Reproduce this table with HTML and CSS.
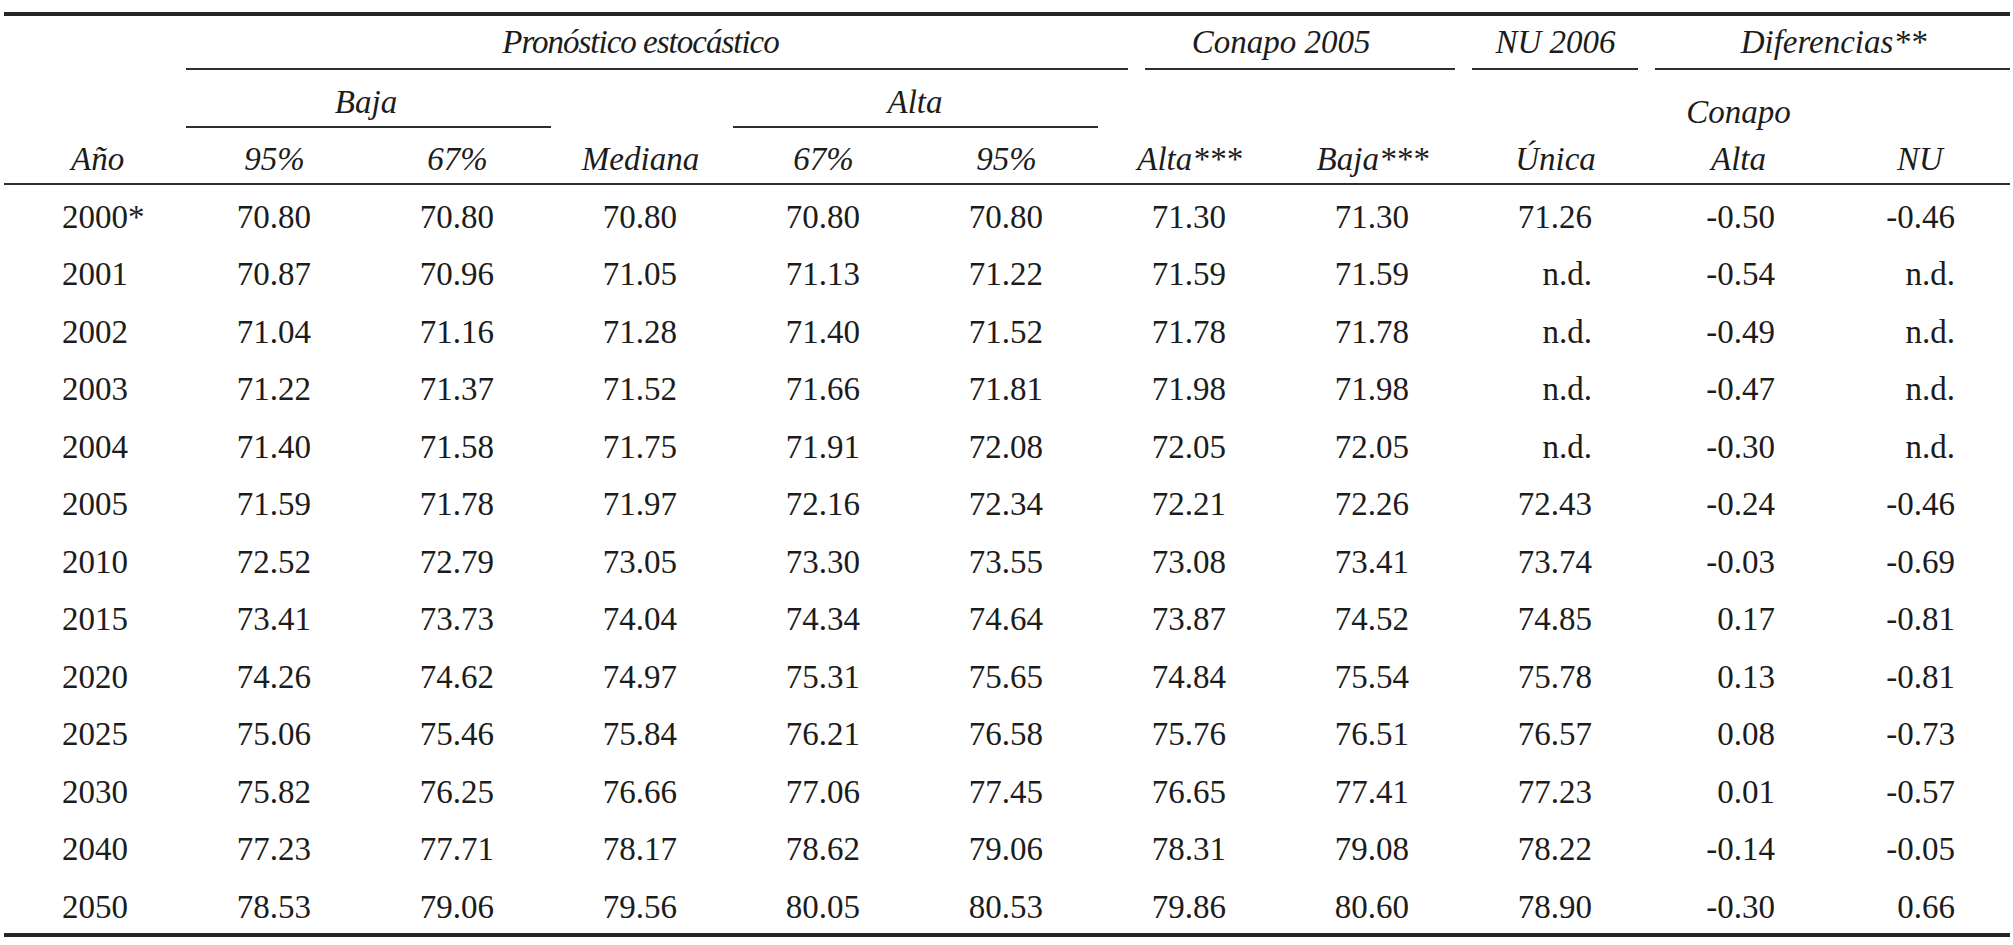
FILE: index.html
```html
<!DOCTYPE html>
<html lang="es">
<head>
<meta charset="utf-8">
<title>Pronóstico estocástico</title>
<link rel="stylesheet" href="styles.css">
</head>
<body>
<table class="tbl">
  <colgroup>
    <col class="c-year">
    <col class="c-num"><col class="c-num"><col class="c-num"><col class="c-num"><col class="c-num">
    <col class="c-num"><col class="c-num"><col class="c-num"><col class="c-num"><col class="c-last">
  </colgroup>
  <thead>
    <tr class="r1">
      <th></th>
      <th colspan="5"><div class="lbl lbl-pron">Pronóstico estocástico</div><div class="rule rule-pron"></div></th>
      <th colspan="2"><div class="lbl">Conapo 2005</div><div class="rule rule-conapo"></div></th>
      <th><div class="lbl">NU 2006</div><div class="rule rule-nu"></div></th>
      <th colspan="2"><div class="lbl lbl-dif">Diferencias**</div><div class="rule rule-dif"></div></th>
    </tr>
    <tr class="r2">
      <th></th>
      <th colspan="2"><div class="lbl">Baja</div><div class="rule rule-baja"></div></th>
      <th></th>
      <th colspan="2"><div class="lbl">Alta</div><div class="rule rule-alta"></div></th>
      <th></th>
      <th></th>
      <th></th>
      <th class="sub"><div class="lbl lbl-sub">Conapo</div></th>
      <th></th>
    </tr>
    <tr class="r3">
      <th class="h-year">Año</th>
      <th>95%</th>
      <th>67%</th>
      <th>Mediana</th>
      <th>67%</th>
      <th>95%</th>
      <th>Alta***</th>
      <th>Baja***</th>
      <th>Única</th>
      <th>Alta</th>
      <th>NU</th>
    </tr>
  </thead>
  <tbody>
    <tr><td>2000*</td><td>70.80</td><td>70.80</td><td>70.80</td><td>70.80</td><td>70.80</td><td>71.30</td><td>71.30</td><td>71.26</td><td>-0.50</td><td>-0.46</td></tr>
    <tr><td>2001</td><td>70.87</td><td>70.96</td><td>71.05</td><td>71.13</td><td>71.22</td><td>71.59</td><td>71.59</td><td>n.d.</td><td>-0.54</td><td>n.d.</td></tr>
    <tr><td>2002</td><td>71.04</td><td>71.16</td><td>71.28</td><td>71.40</td><td>71.52</td><td>71.78</td><td>71.78</td><td>n.d.</td><td>-0.49</td><td>n.d.</td></tr>
    <tr><td>2003</td><td>71.22</td><td>71.37</td><td>71.52</td><td>71.66</td><td>71.81</td><td>71.98</td><td>71.98</td><td>n.d.</td><td>-0.47</td><td>n.d.</td></tr>
    <tr><td>2004</td><td>71.40</td><td>71.58</td><td>71.75</td><td>71.91</td><td>72.08</td><td>72.05</td><td>72.05</td><td>n.d.</td><td>-0.30</td><td>n.d.</td></tr>
    <tr><td>2005</td><td>71.59</td><td>71.78</td><td>71.97</td><td>72.16</td><td>72.34</td><td>72.21</td><td>72.26</td><td>72.43</td><td>-0.24</td><td>-0.46</td></tr>
    <tr><td>2010</td><td>72.52</td><td>72.79</td><td>73.05</td><td>73.30</td><td>73.55</td><td>73.08</td><td>73.41</td><td>73.74</td><td>-0.03</td><td>-0.69</td></tr>
    <tr><td>2015</td><td>73.41</td><td>73.73</td><td>74.04</td><td>74.34</td><td>74.64</td><td>73.87</td><td>74.52</td><td>74.85</td><td>0.17</td><td>-0.81</td></tr>
    <tr><td>2020</td><td>74.26</td><td>74.62</td><td>74.97</td><td>75.31</td><td>75.65</td><td>74.84</td><td>75.54</td><td>75.78</td><td>0.13</td><td>-0.81</td></tr>
    <tr><td>2025</td><td>75.06</td><td>75.46</td><td>75.84</td><td>76.21</td><td>76.58</td><td>75.76</td><td>76.51</td><td>76.57</td><td>0.08</td><td>-0.73</td></tr>
    <tr><td>2030</td><td>75.82</td><td>76.25</td><td>76.66</td><td>77.06</td><td>77.45</td><td>76.65</td><td>77.41</td><td>77.23</td><td>0.01</td><td>-0.57</td></tr>
    <tr><td>2040</td><td>77.23</td><td>77.71</td><td>78.17</td><td>78.62</td><td>79.06</td><td>78.31</td><td>79.08</td><td>78.22</td><td>-0.14</td><td>-0.05</td></tr>
    <tr><td>2050</td><td>78.53</td><td>79.06</td><td>79.56</td><td>80.05</td><td>80.53</td><td>79.86</td><td>80.60</td><td>78.90</td><td>-0.30</td><td>0.66</td></tr>
  </tbody>
</table>
</body>
</html>
```
FILE: styles.css
```css
html, body {
  margin: 0;
  padding: 0;
  background: #ffffff;
}

body {
  padding: 12px 0 0 4px;
  font-family: "Liberation Serif", "Times New Roman", serif;
  font-size: 33px;
  color: #1c1c1c;
}

.tbl {
  border-collapse: separate;
  border-spacing: 0;
  table-layout: fixed;
  width: 2006px;
  border-top: 4px solid #262626;
  border-bottom: 4px solid #262626;
}

.c-year { width: 179px; }
.c-num { width: 183px; }
.c-last { width: 180px; }

.tbl th {
  font-weight: normal;
  font-style: italic;
  padding: 0;
  vertical-align: top;
  text-align: center;
  line-height: 40px;
}

.lbl {
  line-height: 40px;
  text-align: center;
  white-space: nowrap;
}

.lbl-pron { letter-spacing: -1px; }

.rule {
  height: 2px;
  background: #2e2e2e;
}

.r1 th { padding-top: 6px; }
.r1 .rule { margin-top: 6px; }
.r2 th { padding-top: 12px; }
.r2 .rule { margin-top: 4px; }
.r2 th.sub { padding-top: 26px; }
.lbl-sub { line-height: 32px; }

.r1 { height: 54px; }
.r2 { height: 58px; }

.rule-pron { margin-left: 3px; margin-right: -30px; }
.rule-conapo { margin-left: 47px; margin-right: 9px; }
.rule-nu { margin-left: 8px; margin-right: 9px; }
.rule-dif { margin-left: 8px; margin-right: 0; }
.rule-baja { margin-left: 3px; margin-right: -2px; }
.rule-alta { margin-left: 1px; margin-right: 0; }

.lbl-dif { padding-left: 10px; }

.r3 th {
  padding: 11px 0 4px;
  border-bottom: 2px solid #2e2e2e;
}

.r3 th.h-year {
  text-align: left;
  padding-left: 67px;
}

.tbl tbody tr { height: 57.5px; }

.tbl td {
  padding: 6px 55px 0 0;
  line-height: 40px;
  text-align: right;
  vertical-align: middle;
  white-space: nowrap;
}

.tbl td:first-child {
  text-align: left;
  padding: 6px 0 0 58px;
}
```
